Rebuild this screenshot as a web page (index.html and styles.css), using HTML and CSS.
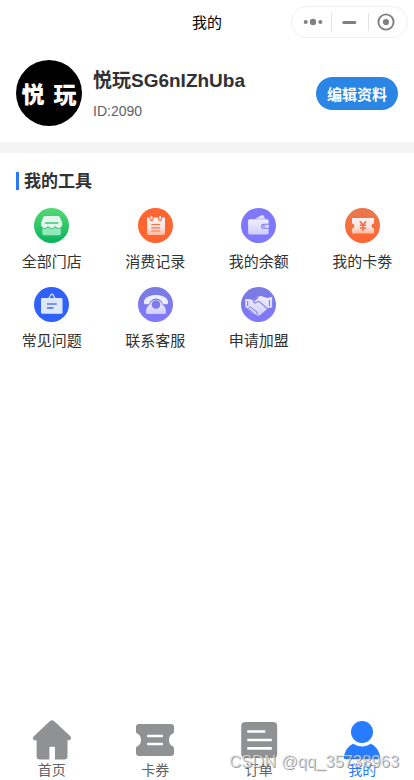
FILE: index.html
```html
<!DOCTYPE html>
<html lang="zh-CN">
<head>
    <meta charset="UTF-8">
    <meta name="viewport" content="width=device-width, initial-scale=1.0">
    <title>我的</title>
    <link rel="stylesheet" href="styles.css">
</head>
<body>
    <div class="page">
        <header class="navbar">
            <div class="nav-title">我的</div>
            <div class="capsule">
                <svg width="116" height="32" viewBox="0 0 116 32">
                    <g fill="#808080">
                        <circle cx="13.700" cy="16" r="2"/>
                        <circle cx="21" cy="16" r="3.200"/>
                        <circle cx="28.300" cy="16" r="2"/>
                        <rect x="50.300" y="14.900" width="14" height="3" rx="1.500"/>
                        <circle cx="94" cy="16" r="3.100"/>
                    </g>
                    <circle cx="94" cy="16" r="7.600" fill="none" stroke="#808080" stroke-width="1.900"/>
                    <path d="M39.500 7v18M76.500 7v18" stroke="#e2e2e2"/>
                </svg>
            </div>
        </header>

        <section class="profile">
            <div class="avatar"><span>悦</span><span>玩</span></div>
            <div class="info">
                <div class="name">悦玩SG6nIZhUba</div>
                <div class="uid">ID:2090</div>
            </div>
            <button class="edit">编辑资料</button>
        </section>

        <section class="tools">
            <h2 class="tools-title"><span>我的工具</span></h2>
            <div class="grid">
                <div class="tool">
                    <svg viewBox="0 0 35 35">
                        <defs>
                            <linearGradient id="green" x2="0" y2="1"><stop stop-color="#56d875"/><stop offset="1" stop-color="#08b45b"/></linearGradient>
                            <linearGradient id="orange" x2="0" y2="1"><stop stop-color="#e8794f"/><stop offset="1" stop-color="#ff6531"/></linearGradient>
                            <linearGradient id="purple" x2="0" y2="1"><stop stop-color="#7a7cdf"/><stop offset="1" stop-color="#8078fb"/></linearGradient>
                            <linearGradient id="lilac" x2="0" y2="1"><stop stop-color="#efeffd"/><stop offset="1" stop-color="#cfcdfa"/></linearGradient>
                            <linearGradient id="peach" x2="0" y2="1"><stop stop-color="#f3f1f3"/><stop offset=".6" stop-color="#f8e4df"/><stop offset="1" stop-color="#ffb69c"/></linearGradient>
                        </defs>
                        <circle cx="17.500" cy="17.500" r="17.500" fill="url(#green)"/>
                        <path d="M8.300 19.500h18.600v6.200q0 1.600-1.600 1.600H9.900q-1.600 0-1.600-1.600z" fill="#91e8ba"/>
                        <path d="M11 8h13q1.300 0 1.900 1.200l2.300 5.300v3.200q-1 2.500-3.400 2.500-2 0-3.400-1.800-1.500 1.900-3.700 1.900T14 18.400q-1.500 1.800-3.500 1.800-2.400 0-3.400-2.500v-3.200l2.200-5.300Q9.800 8 11 8z" fill="#e4f5ee"/>
                        <path d="M7.100 18.200q1 2.300 3.400 2.300 2 0 3.500-1.800 1.500 1.800 3.700 1.800t3.700-1.800q1.400 1.800 3.400 1.800 2.400 0 3.400-2.300" fill="none" stroke="#29bd69" stroke-width=".8"/>
                        <path d="M11.800 15h11.800" stroke="#3fc974" stroke-width="1.700" stroke-linecap="round"/>
                    </svg>
                    <span>全部门店</span>
                </div>
                <div class="tool">
                    <svg viewBox="0 0 35 35">
                        <circle cx="17.500" cy="17.500" r="17.500" fill="#ff6531"/>
                        <path d="M9 9.500h18v15.800q0 1.700-1.700 1.700H10.700Q9 27 9 25.300z" fill="url(#peach)"/>
                        <path d="M13.500 8.500v2.500M22 8.500v2.500" stroke="#ff6531" stroke-width="3.800" stroke-linecap="round"/>
                        <path d="M13.500 8.800v2M22 8.800v2" stroke="#f6e4e0" stroke-width="2" stroke-linecap="round"/>
                        <path d="M13.200 16.500h9M13.200 19.800h9M13.200 23h9" stroke="#ff7142" stroke-width="1.200"/>
                    </svg>
                    <span>消费记录</span>
                </div>
                <div class="tool">
                    <svg viewBox="0 0 35 35">
                        <circle cx="17.500" cy="17.500" r="17.500" fill="#8078fb"/>
                        <path d="M14 10.800l6.500-3.500q1.500-.7 2.200.6l1.500 2.900z" fill="#e5e4fd"/>
                        <path d="M8.600 11.300h17.500q1.500 0 1.500 1.500v12.100q0 1.500-1.500 1.500H8.600q-1.500 0-1.500-1.500V12.800q0-1.500 1.500-1.500z" fill="url(#lilac)"/>
                        <path d="M28.500 15.700h-5.900a2.500 2.500 0 0 0 0 5h5.900z" fill="#8078fb"/>
                        <path d="M28 16.700h-5.200a1.500 1.500 0 0 0 0 3H28z" fill="#dcdafa"/>
                        <circle cx="23" cy="18.200" r=".9" fill="#8078fb"/>
                    </svg>
                    <span>我的余额</span>
                </div>
                <div class="tool">
                    <svg viewBox="0 0 35 35">
                        <circle cx="17.500" cy="17.500" r="17.500" fill="url(#orange)"/>
                        <path d="M7 10h22v5.500a2.500 2.500 0 0 0 0 5V25.500H7v-5a2.500 2.500 0 0 0 0-5z" fill="url(#peach)"/>
                        <path d="M14.900 13.300l3.100 3.700 3.100-3.700M18 17v6M14.900 17.300h6.200M14.900 20h6.200" fill="none" stroke="#f36d40" stroke-width="1.500"/>
                    </svg>
                    <span>我的卡劵</span>
                </div>
                <div class="tool">
                    <svg viewBox="0 0 35 35">
                        <circle cx="17.500" cy="17.500" r="17.500" fill="#3062fb"/>
                        <path d="M14.700 11.500l2.200-3.700q1.100-1.200 2.200 0l1.900 3.700" fill="none" stroke="#e7ebfa" stroke-width="1.200"/>
                        <rect x="7" y="11" width="21.500" height="15.800" rx="1.300" fill="#dce7fb"/>
                        <path d="M13 17h9.700M13 20.900h6.500" stroke="#567bf8" stroke-width="1.600"/>
                    </svg>
                    <span>常见问题</span>
                </div>
                <div class="tool">
                    <svg viewBox="0 0 35 35">
                        <circle cx="17.500" cy="17.500" r="17.500" fill="url(#purple)"/>
                        <path d="M5.900 14.500C6.800 10.500 12 8.100 18 8.100s11.200 2.400 12.100 6.400q.3 2.100-.6 2.500-2.200.7-4.400-.1-1-.5-1.200-2.400-2.400-2.900-5.900-2.900t-5.900 2.900q-.2 1.900-1.200 2.400-2.200.8-4.400.1-.9-.4-.6-2.500z" fill="#ececfc"/>
                        <path d="M13.600 14.300q4.400-3 8.800 0 1.500 3.300 4.200 5.400 1.700 2.300 1.400 5.700-.2 1.700-2 1.700H10q-1.800 0-2-1.700-.3-3.400 1.400-5.700 2.700-2.100 4.200-5.400z" fill="url(#lilac)"/>
                        <circle cx="18" cy="17.500" r="4.300" fill="#7e7be9"/>
                    </svg>
                    <span>联系客服</span>
                </div>
                <div class="tool">
                    <svg viewBox="0 0 35 35">
                        <circle cx="17.500" cy="17.500" r="17.500" fill="url(#purple)"/>
                        <path d="M4.300 12l5 .2 2.300.7 4.700-2.900 3.500-.9 6.600 1.800 4.700-1v10.600l-3.800.4-8 7.200-2.200.9-2.500-1.600-3.800-1.400-5.400-5.400H4.300z" fill="url(#lilac)"/>
                        <path d="M11 13.300l5.200-2.600M17.500 10.400l-4.700 3.700q-.9 1.700 1.700 1.800l3.400-1.800 8.700 7.800" fill="none" stroke="#807be9" stroke-width="1.100"/>
                        <path d="M7.200 21.300l2-1.400 6.800 5.300M8 22.200l5 4.600M15.500 24.500l1.200 3.200" fill="none" stroke="#807be9"/>
                        <path d="M6.700 14v5M28.500 13v6" stroke="#807be9" stroke-width="1.100"/>
                    </svg>
                    <span>申请加盟</span>
                </div>
            </div>
        </section>

        <nav class="tabbar">
            <div class="tab">
                <svg viewBox="0 0 40 40" fill="#909193">
                    <path d="M18 1q2-1.700 4 0l16.200 15q2.100 2.300-.7 4.200H35.500v16q0 3.200-3.400 3.200H23V28q0-1.200-1.200-1.200h-3.200q-1.200 0-1.200 1.200v11.400H8q-3.400 0-3.400-3.200v-16H2.300q-2.600-1.600-.5-4z"/>
                </svg>
                <span>首页</span>
            </div>
            <div class="tab">
                <svg viewBox="0 0 40 40">
                    <path d="M4.200 4h31.600q3.200 0 3.200 3v5q0 1-1.300 1.600a7.200 7.200 0 0 0 0 12.600Q39 27 39 28v5q0 3-3.200 3H4.200Q1 36 1 33v-5q0-1 1.300-1.800a7.200 7.200 0 0 0 0-12.600Q1 13 1 12V7q0-3 3.200-3z" fill="#909193"/>
                    <path d="M13.200 16h13.600M13.200 24h13.600" stroke="#fff" stroke-width="2.600" stroke-linecap="round"/>
                </svg>
                <span>卡券</span>
            </div>
            <div class="tab">
                <svg viewBox="0 0 40 40">
                    <rect x="2.200" y="2" width="36" height="36" rx="4" fill="#909193"/>
                    <path d="M8.300 11.500h18M8.300 20h24.500M8.300 28.300h24.500" stroke="#fff" stroke-width="2.700"/>
                </svg>
                <span>订单</span>
            </div>
            <div class="tab active">
                <svg viewBox="0 0 40 40" fill="#267bff">
                    <circle cx="20" cy="12" r="11"/>
                    <path d="M11 23.800q9 5.400 18 0 6.800 3 9.300 13 .4 2.400-2 2.400H3.700q-2.400 0-2-2.400 2.500-10 9.300-13z"/>
                </svg>
                <span>我的</span>
            </div>
        </nav>
        <div class="watermark">CSDN @qq_35738963</div>
    </div>
</body>
</html>
```

FILE: styles.css
```css
body {
    margin: 0;
    font-family: "Liberation Sans", "Noto Sans CJK SC", sans-serif;
    color: #303133;
    background: #fff;
}
.page {
    position: relative;
    display: flex;
    flex-direction: column;
    height: 780px;
    overflow: hidden;
}

/* 顶部导航 */
.navbar {
    display: grid;
    grid-template-columns: 1fr auto 1fr;
    align-items: center;
    height: 44px;
}
.nav-title {
    grid-column: 2;
    padding-bottom: 2px;
    font-size: 15px;
    color: #000;
}
.capsule {
    justify-self: end;
    box-sizing: border-box;
    width: 117px;
    height: 32px;
    margin-right: 6px;
    border: 1px solid #efefef;
    border-radius: 16px;
}
.capsule svg {
    display: block;
    margin-top: -1px;
}

/* 用户信息 */
.profile {
    display: flex;
    align-items: center;
    box-sizing: border-box;
    height: 109px;
    padding: 0 16px;
    border-bottom: 11px solid #f4f4f4;
}
.avatar {
    display: flex;
    align-items: center;
    justify-content: center;
    gap: 9px;
    width: 66px;
    height: 66px;
    border-radius: 50%;
    background: #000;
    color: #fff;
    font-size: 23px;
    font-weight: 900;
    line-height: 30px;
    font-family: "Noto Sans CJK SC", sans-serif;
}
.info {
    flex: 1;
    margin-left: 11px;
    padding-top: 3px;
}
.name {
    font-size: 19px;
    font-weight: bold;
    line-height: 28px;
}
.uid {
    margin-top: 5px;
    font-size: 14px;
    line-height: 22px;
    color: #606266;
}
.edit {
    width: 82px;
    height: 33px;
    padding: 0;
    border: 0;
    border-radius: 17px;
    background: #2b85e4;
    color: #fff;
    font: bold 15px "Liberation Sans", "Noto Sans CJK SC", sans-serif;
}

/* 我的工具 */
.tools {
    flex: 1;
    padding-top: 19px;
}
.tools-title {
    display: flex;
    align-items: center;
    gap: 5px;
    height: 18px;
    margin: 0 0 0 16px;
    font-size: 17px;
    line-height: 18px;
}
.tools-title::before {
    content: "";
    width: 3px;
    height: 18px;
    background: #2979ff;
}
.tools-title span {
    padding-top: 2px;
}
.grid {
    display: grid;
    grid-template-columns: repeat(4, 1fr);
    padding-top: 18px;
}
.tool {
    display: flex;
    flex-direction: column;
    align-items: center;
    height: 79px;
    font-size: 15px;
}
.tool svg {
    width: 35px;
    height: 35px;
}
.tool span {
    margin-top: 8px;
    line-height: 22px;
}

/* 底部菜单 */
.tabbar {
    display: flex;
    height: 60px;
}
.tab {
    flex: 1;
    display: flex;
    flex-direction: column;
    align-items: center;
    font-size: 14px;
    color: #606266;
}
.tab svg {
    width: 40px;
    height: 40px;
}
.tab span {
    line-height: 20px;
}
.tab.active {
    color: #2979ff;
}
.watermark {
    position: absolute;
    right: 15px;
    bottom: 8px;
    font-size: 16.6px;
    line-height: 20px;
    color: rgba(225, 225, 225, .75);
    text-shadow: 1px 1px 0 rgba(90, 90, 90, .6);
    white-space: nowrap;
}
```
